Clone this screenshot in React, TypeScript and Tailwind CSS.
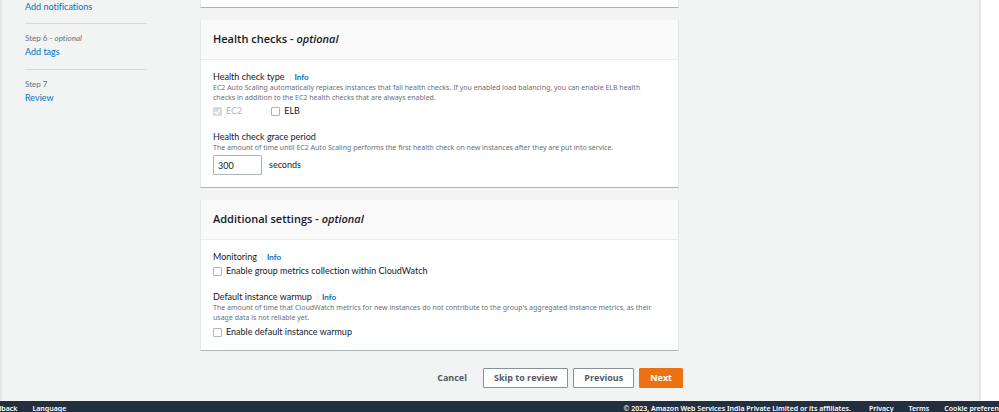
import type { ReactNode } from "react";

function Card({ title, children }: { title: string; children: ReactNode }) {
  return (
    <section className="mb-3 border-x border-b border-[#e3e7e7] border-b-[#aab7b8] bg-white">
      <header className="flex h-10 items-center border-b border-[#eaeded] bg-[#fafafa] px-3 pb-0.5">
        <h2 className="font-['Open_Sans',sans-serif] text-[11px] leading-4 font-semibold text-[#16191f]">
          {title} - <em>optional</em>
        </h2>
      </header>
      <div className="flex flex-col gap-[13px] px-3 pt-2.5 pb-3">{children}</div>
    </section>
  );
}

function FieldTitle({ children, info = false }: { children: ReactNode; info?: boolean }) {
  return (
    <div className="flex h-[13px] items-center text-[9px] leading-3">
      <span>{children}</span>
      {info && (
        <a href="#info" className="ml-[5px] border-l border-[#eaeded] pl-1 text-[8px] leading-2 font-bold text-[#0073bb]">
          Info
        </a>
      )}
    </div>
  );
}

function Hint({ children }: { children: ReactNode }) {
  return <p className="pr-2 font-['Noto_Sans',sans-serif] text-[7px] leading-[10px] text-[#687078]">{children}</p>;
}

function Check({ label, locked = false }: { label: string; locked?: boolean }) {
  return (
    <label className={`flex h-3 items-center gap-1 text-[9px] leading-3 ${locked ? "text-[#aab7b8]" : ""}`}>
      <span className="relative flex size-[9px]">
        <input
          type="checkbox"
          defaultChecked={locked}
          disabled={locked}
          className="size-[9px] appearance-none rounded-[1px] border border-[#aab7b8] bg-white disabled:border-[#d5dbdb] disabled:bg-[#d5dbdb]"
        />
        {locked && (
          <svg viewBox="0 0 9 9" className="pointer-events-none absolute inset-0 size-[9px]" fill="none" stroke="#fff" strokeWidth="1.3">
            <path d="M1.7 4.7 3.7 6.7 7.3 2.3" />
          </svg>
        )}
      </span>
      {label}
    </label>
  );
}

function Step({ caption, optional, link }: { caption: string; optional?: boolean; link: string }) {
  return (
    <li className="mt-[9px] border-t border-[#d5dbdb] pt-2">
      <div className="text-[8px] leading-3 text-[#687078]">
        {caption}
        {optional && (
          <>
            {" "}- <em>optional</em>
          </>
        )}
      </div>
      <a href="#step" className="block text-[9px] leading-4 text-[#0073bb]">
        {link}
      </a>
    </li>
  );
}

export default function App() {
  const button = "h-5 rounded-[1px] border px-2.5 text-[9px] leading-3 font-bold";
  return (
    <div className="flex h-screen flex-col overflow-hidden bg-white font-['Lato',sans-serif] text-[#16191f] [font-variant-ligatures:none]">
      <div className="mr-[18px] flex min-h-0 flex-1 border-r-2 border-l-2 border-[#e3e7e7] bg-[#f2f3f3]">
        <nav className="ml-[23px] w-[122px] shrink-0">
          <ol>
            <li>
              <a href="#step" className="block text-[9px] leading-[14px] text-[#0073bb]">
                Add notifications
              </a>
            </li>
            <Step caption="Step 6" optional link="Add tags" />
            <Step caption="Step 7" link="Review" />
          </ol>
        </nav>
        <main className="ml-[53px] w-[479px]">
          <div className="mb-3 h-2 border-x border-b border-[#e3e7e7] border-b-[#aab7b8] bg-white" />
          <Card title="Health checks">
            <div>
              <FieldTitle info>Health check type</FieldTitle>
              <Hint>
                EC2 Auto Scaling automatically replaces instances that fail health checks. If you enabled load balancing, you can enable ELB health checks in addition to the EC2 health checks that are always enabled.
              </Hint>
              <div className="mt-0.5 flex gap-[29px]">
                <Check label="EC2" locked />
                <Check label="ELB" />
              </div>
            </div>
            <div>
              <label htmlFor="grace">
                <FieldTitle>Health check grace period</FieldTitle>
              </label>
              <Hint>The amount of time until EC2 Auto Scaling performs the first health check on new instances after they are put into service.</Hint>
              <div className="mt-0.5 flex items-center gap-[7px] text-[9px] leading-3">
                <input id="grace" defaultValue="300" className="h-5 w-[49px] rounded-[1px] border border-[#aab7b8] bg-white px-1" />
                seconds
              </div>
            </div>
          </Card>
          <Card title="Additional settings">
            <div>
              <FieldTitle info>Monitoring</FieldTitle>
              <div className="mt-0.5">
                <Check label="Enable group metrics collection within CloudWatch" />
              </div>
            </div>
            <div>
              <FieldTitle info>Default instance warmup</FieldTitle>
              <Hint>
                The amount of time that CloudWatch metrics for new instances do not contribute to the group's aggregated instance metrics, as their usage data is not reliable yet.
              </Hint>
              <div className="mt-[3px]">
                <Check label="Enable default instance warmup" />
              </div>
            </div>
          </Card>
          <div className="-mr-1 mt-[17px] flex justify-end gap-[5px] font-['Open_Sans',sans-serif]">
            <button className={`${button} border-transparent text-[#545b64]`}>Cancel</button>
            <button className={`${button} border-[#879196] bg-white text-[#545b64]`}>Skip to review</button>
            <button className={`${button} border-[#879196] bg-white text-[#545b64]`}>Previous</button>
            <button className={`${button} border-[#ec7211] bg-[#ec7211] text-white`}>Next</button>
          </div>
        </main>
      </div>
      <footer className="flex h-[11px] shrink-0 bg-[#232f3e] font-['Noto_Sans',sans-serif] text-[7px] leading-[15px] font-semibold whitespace-nowrap text-white">
        <a href="#feedback" className="-ml-[15px]">Feedback</a>
        <a href="#language" className="ml-[15px]">Language</a>
        <span className="ml-auto">© 2023, Amazon Web Services India Private Limited or its affiliates.</span>
        <a href="#privacy" className="ml-[18px]">Privacy</a>
        <a href="#terms" className="ml-[15px]">Terms</a>
        <a href="#cookies" className="-mr-[11px] ml-[15px]">Cookie preferences</a>
      </footer>
    </div>
  );
}
